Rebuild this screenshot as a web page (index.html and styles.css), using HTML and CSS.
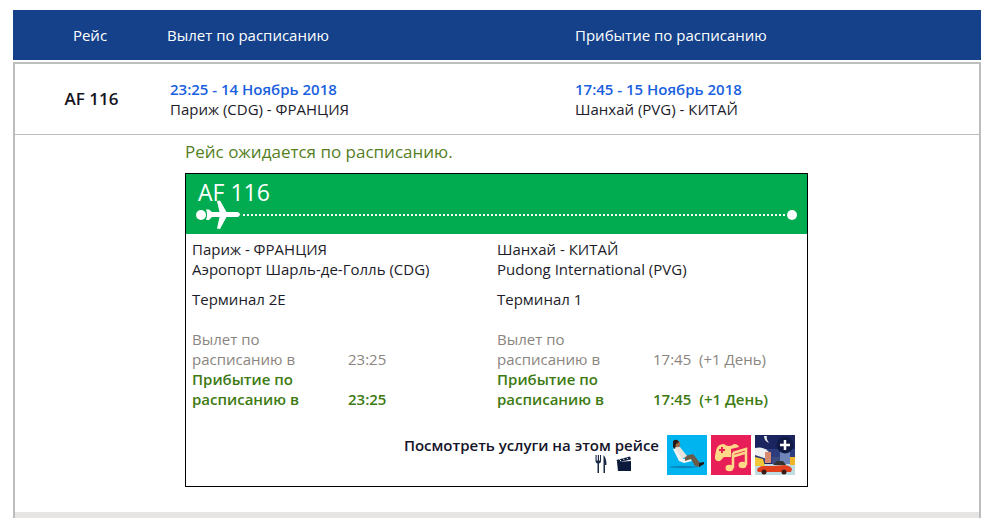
FILE: index.html
```html
<!DOCTYPE html>
<html lang="ru">
<head>
<meta charset="utf-8">
<title>AF 116</title>
<link rel="stylesheet" href="styles.css">
</head>
<body>
<div class="page">
  <div class="head">
    <div class="c-flight">Рейс</div>
    <div class="c-dep">Вылет по расписанию</div>
    <div class="c-arr">Прибытие по расписанию</div>
  </div>
  <div class="panel">
    <div class="row">
      <div class="c-flight flight-no">AF 116</div>
      <div class="c-dep"><div class="when">23:25 - 14 Ноябрь 2018</div><div>Париж (CDG) - ФРАНЦИЯ</div></div>
      <div class="c-arr"><div class="when">17:45 - 15 Ноябрь 2018</div><div>Шанхай (PVG) - КИТАЙ</div></div>
    </div>
    <div class="detail">
      <div class="status">Рейс ожидается по расписанию.</div>
      <div class="card">
        <div class="banner">
          <div class="banner-title">AF 116</div>
          <div class="track">
            <span class="dot"></span>
            <svg class="plane" width="36" height="30" viewBox="0 0 36 30"><path d="M0 9.500 L3 9.500 L6 12 L13.500 12 L11 1 L14 0.500 L20.500 12 L32 12 Q36 14.500 32 17 L20.500 17 L14 29 L11 28.500 L13.500 17 L6 17 L3 20 L0 20 Q2 14.500 0 9.500 Z" fill="#fff"/></svg>
            <span class="dots"></span>
            <span class="dot end"></span>
          </div>
        </div>
        <div class="legs">
          <div class="leg">
            <div>Париж - ФРАНЦИЯ</div>
            <div>Аэропорт Шарль-де-Голль (CDG)</div>
            <div class="terminal">Терминал 2E</div>
            <div class="times sched"><div class="t-label">Вылет по расписанию в</div><div class="t-val">23:25</div></div>
            <div class="times actual"><div class="t-label">Прибытие по расписанию в</div><div class="t-val">23:25</div></div>
          </div>
          <div class="leg">
            <div>Шанхай - КИТАЙ</div>
            <div>Pudong International (PVG)</div>
            <div class="terminal">Терминал 1</div>
            <div class="times sched"><div class="t-label">Вылет по расписанию в</div><div class="t-val">17:45&nbsp; (+1 День)</div></div>
            <div class="times actual"><div class="t-label">Прибытие по расписанию в</div><div class="t-val">17:45&nbsp; (+1 День)</div></div>
          </div>
        </div>
        <div class="services">
          <div class="svc-text">
            <div class="svc-title">Посмотреть услуги на этом рейсе</div>
            <div class="svc-icons">
              <svg width="12" height="18" viewBox="0 0 12 18"><path d="M0.500 0 V6 Q0.500 8 2.500 8.500 V18 H4 V8.500 Q6 8 6 6 V0 H5 V5.500 H4 V0 H2.800 V5.500 H1.600 V0 Z M8.500 0 Q11.500 3 11.500 10 H10 V18 H8.500 Z" fill="#1a2a44"/></svg>
              <svg width="16" height="16" viewBox="0 0 16 16"><path d="M1 6 L15 5 V15 H2 Z" fill="#0b1a3a"/><path d="M0.500 4 L14 0.500 L15 3.500 L1.500 6.500 Z" fill="#0b1a3a"/><path d="M3.500 3.500 L5 5 M7 2.500 L8.500 4.200 M10.500 1.700 L12 3.300" stroke="#fff" stroke-width="1"/></svg>
            </div>
          </div>
          <svg class="thumb" viewBox="0 0 40 40"><rect width="40" height="40" fill="#00b5ef"/><ellipse cx="16" cy="32" rx="14" ry="1.200" fill="#0a86b8"/><path d="M6 14 L9 13 L16 24 L23 23 L25 26 L17 28 L12 26 Z" fill="#f2f2f2"/><path d="M18 21 L26 19 L33 28 L36 27 L37 29 L32 32 L28 31 L24 24 L18 26 Z" fill="#6b5a48"/><path d="M32 28 L37 27 L37 29 L32 32 Z" fill="#1c1c1c"/><path d="M8 12 L13 12 L20 21 L15 24 Z" fill="#e8e4dc"/><circle cx="10" cy="9" r="3.200" fill="#a06a48"/><path d="M6 6 Q10 3 12 7 L9 9 L8 14 L6 12 Z" fill="#241a14"/></svg>
          <svg class="thumb" viewBox="0 0 40 40"><rect width="40" height="40" fill="#e81e58"/><path d="M5 16 Q6 9 13 9 Q15 11 18 11 Q21 11 23 9 Q27 9 28 12 L20 14 V22 L13 22 L9 26 Q3 27 4 21 Z" fill="#ffd888"/><path d="M8 15 H14 M11 12 V18" stroke="#e81e58" stroke-width="2"/><path d="M22 18 L35 14 V30 M22 18 V33 M22 21.500 L35 17.500" stroke="#ffd888" stroke-width="2.500" fill="none"/><ellipse cx="18.500" cy="33" rx="4" ry="3.200" fill="#ffd888"/><ellipse cx="31.500" cy="30" rx="4" ry="3.200" fill="#ffd888"/></svg>
          <svg class="thumb" viewBox="0 0 40 40"><rect width="40" height="40" fill="#1a2560"/><rect y="14" width="40" height="14" fill="#2c3c7c"/><rect y="29" width="40" height="11" fill="#bfdce4"/><path d="M0 13 Q8 11 14 17 L12 24 L0 20 Z" fill="#eef0f0"/><path d="M0 22 L8 24 L10 31 H0 Z" fill="#f2c838"/><rect x="10" y="17" width="6" height="11" fill="#d88a70"/><rect x="25" y="14" width="10" height="15" fill="#6e86b8"/><rect x="17" y="22" width="8" height="7" fill="#3c4c80"/><path d="M35 22 H40 V30 H35 Z" fill="#f0b428"/><path d="M18 30 L22 26 H28 L31 30 Z" fill="#333"/><path d="M2 35 Q3 31 10 31 H18 L30 30 Q36 31 37 34 L36 37 H3 Z" fill="#e0401c"/><circle cx="9" cy="37" r="2.500" fill="#3a1a14"/><circle cx="29" cy="37" r="2.500" fill="#3a1a14"/><path d="M9 1 Q9 6 14 8 Q11 4 12 1 Z" fill="#e8e8e8"/><circle cx="30" cy="10" r="8.500" fill="#101a44"/><path d="M25 10 H35 M30 5 V15" stroke="#fff" stroke-width="2.500"/></svg>
        </div>
      </div>
    </div>
    <div class="foot"></div>
  </div>
</div>
</body>
</html>
```
FILE: styles.css
```css
html, body { margin: 0; padding: 0; background: #fff; }
body { font-family: "Open Sans", sans-serif; font-size: 15px; line-height: 20px; color: #1c1c2a; }
.page { padding: 10px 12px 0 13px; height: 508px; overflow: hidden; }
.head { display: flex; height: 50px; align-items: center; background: #14418a; color: #fff; }
.c-flight { width: 154px; flex: none; text-align: center; }
.c-dep { width: 408px; flex: none; }
.c-arr { flex: 1; }
.panel { margin-top: 2px; border: 2px solid #bdbdbd; border-bottom: 0; }
.row { display: flex; align-items: center; height: 70px; border-bottom: 1px solid #bdbdbd; }
.row .c-flight { width: 153px; }
.flight-no { font-weight: 600; font-size: 17px; color: #14141e; }
.when { color: #1a5fe0; font-weight: 600; }
.row .c-dep { width: 405px; padding-left: 2px; box-sizing: border-box; }
.row .c-arr { padding-left: 2px; }
.detail { padding: 7px 0 25px 170px; }
.status { font-size: 17px; color: #55801f; line-height: 20px; margin-bottom: 11px; }
.card { width: 621px; border: 1px solid #000; }
.banner { background: #00ac4f; height: 60px; color: #fff; position: relative; }
.banner-title { font-size: 23px; line-height: 30px; padding: 3px 0 0 12px; }
.track { position: absolute; left: 10px; right: 10px; top: 26px; height: 30px; display: flex; align-items: center; }
.dot { width: 10px; height: 10px; border-radius: 50%; background: #fff; flex: none; }
.plane { flex: none; }
.dots { flex: 1; height: 2px; margin-left: 1px; background: repeating-linear-gradient(90deg, #fff 0 2px, transparent 2px 4px); }
.legs { display: flex; padding: 5px 5px 0 6px; }
.leg { width: 305px; flex: none; }
.terminal { margin: 10px 0 20px; }
.times { display: flex; }
.t-label { width: 156px; flex: none; padding-right: 30px; box-sizing: border-box; }
.t-val { align-self: flex-end; }
.sched { color: #8a8580; }
.actual { color: #3d7a12; font-weight: 600; }
.services { display: flex; justify-content: flex-end; padding: 26px 12px 11px 0; gap: 4px; align-items: flex-start; }
.svc-text { margin-right: 4px; text-align: right; }
.svc-title { font-weight: 600; color: #14142a; line-height: 20px; }
.svc-icons { display: flex; justify-content: flex-end; gap: 9px; padding-right: 27px; height: 18px; align-items: center; }
.thumb { width: 40px; height: 40px; flex: none; }
.foot { height: 6px; background: #e6e5e3; }
```
